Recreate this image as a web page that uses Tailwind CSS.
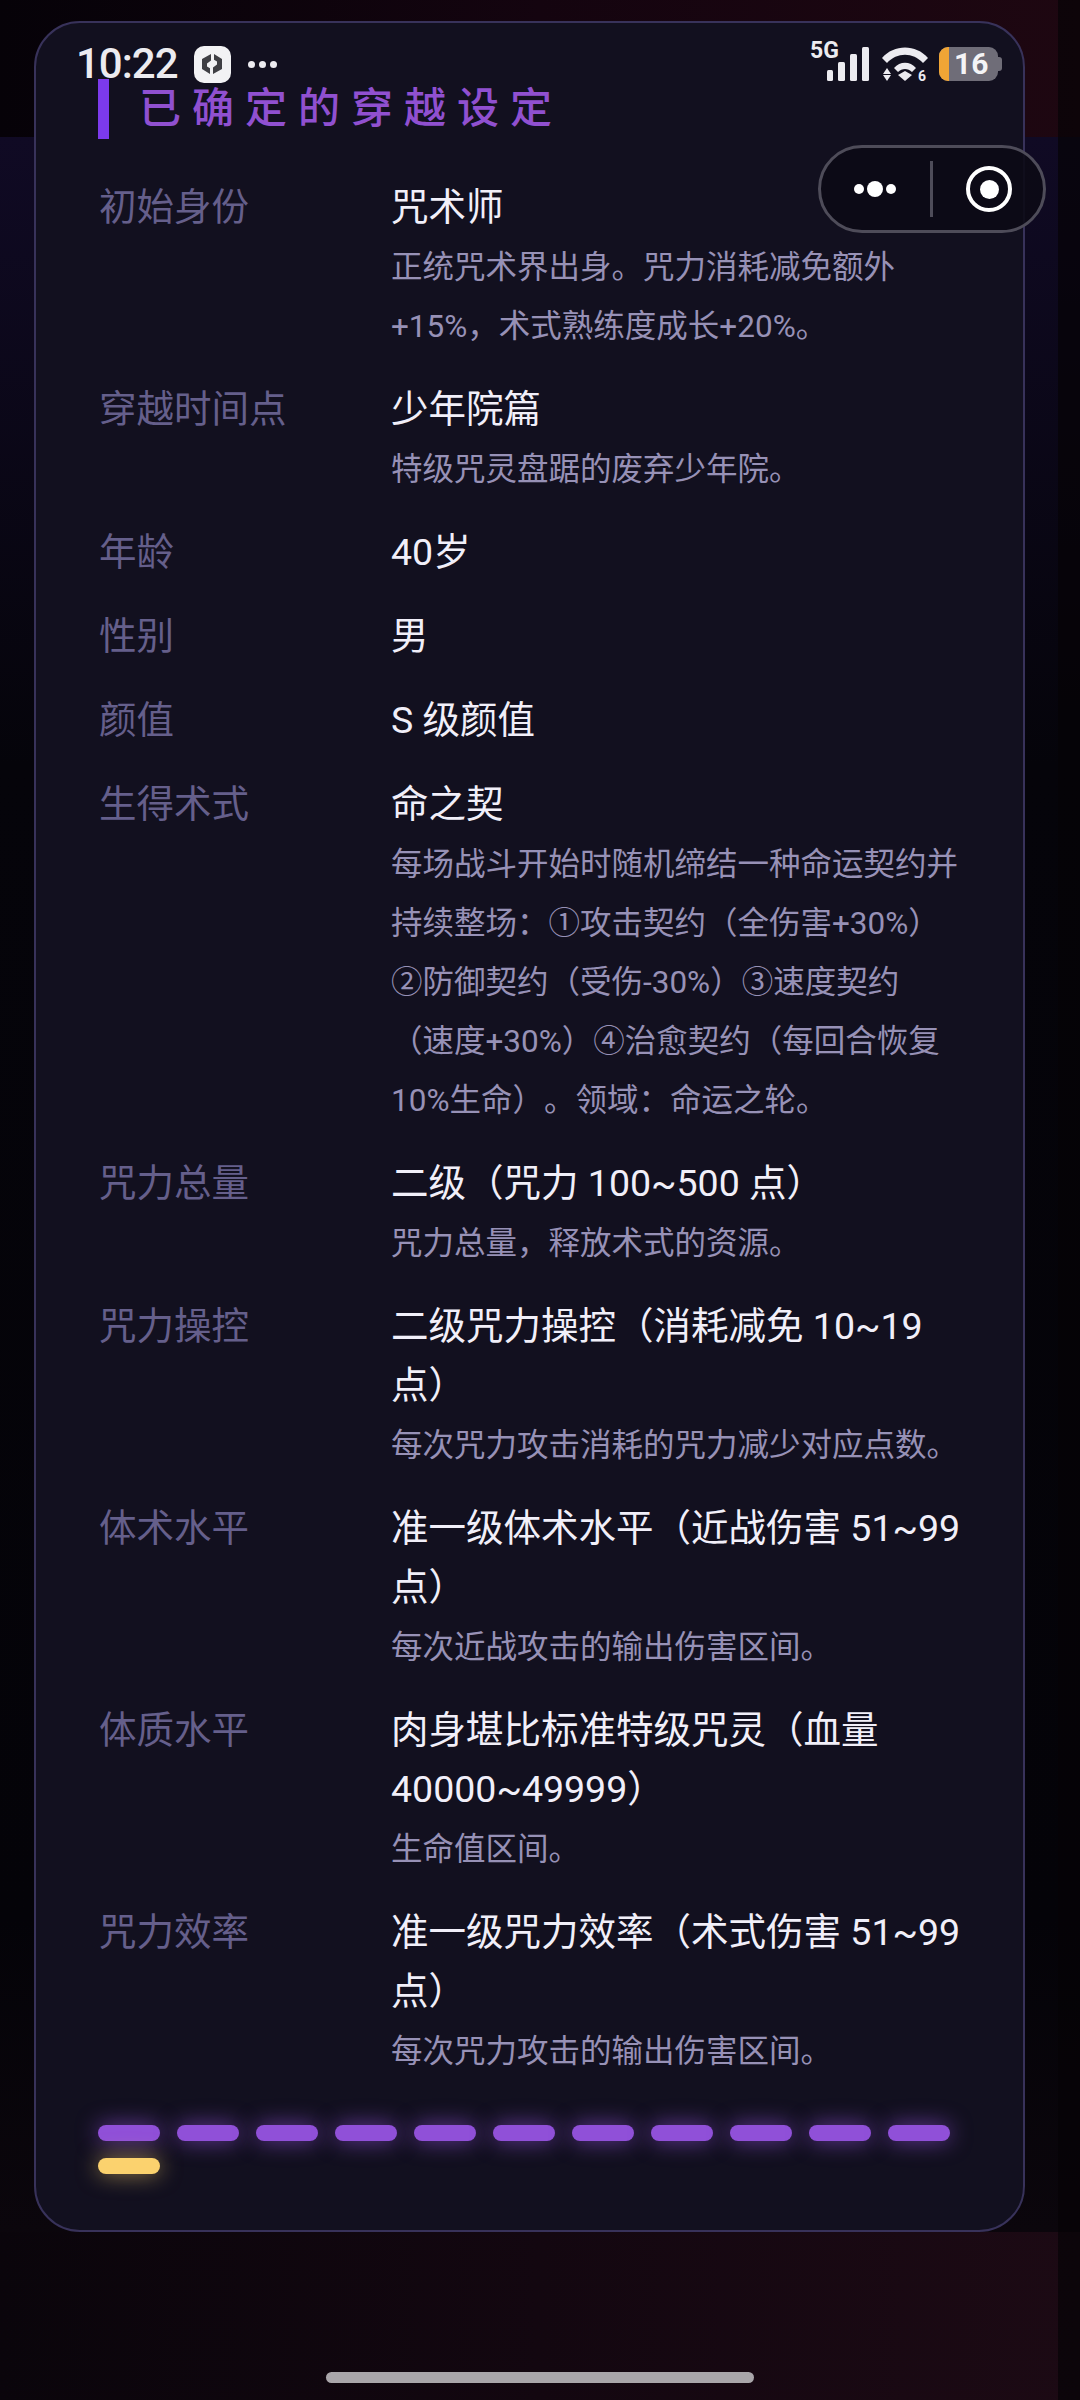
<!DOCTYPE html>
<html lang="zh-CN">
<head>
    <meta charset="UTF-8">
    <meta name="viewport" content="width=device-width, initial-scale=1.0">
    <title>已确定的穿越设定</title>
    <script src="https://cdn.jsdelivr.net/npm/@tailwindcss/browser@4"></script>
</head>
<body class="bg-[#08050d]">
<div class="relative w-[1080px] h-[2400px] overflow-hidden [text-spacing-trim:space-all] font-['Roboto','Noto_Sans_CJK_SC',sans-serif]">
    <!-- backdrop -->
    <div class="absolute inset-0 flex flex-col">
        <div class="h-[137px] bg-gradient-to-r from-[#060208] via-[#14040f] to-[#1e0711]"></div>
        <div class="flex-1 bg-[linear-gradient(to_bottom,#100a24_0%,#05040a_30%,#040308_85%,#0b060c_100%)]"></div>
        <div class="h-[168px] bg-gradient-to-r from-[#0a050b] via-[#130710] to-[#1c0a14]"></div>
    </div>
    <div class="absolute top-0 bottom-0 right-0 w-[22px] bg-[#050306]/70"></div>

    <!-- card -->
    <main class="relative ml-[34px] mt-[21px] w-[991px] h-[2211px] rounded-[46px] border-2 border-[#38325a] bg-[#12101f] pt-[56px] pl-[62px]">
        <div class="flex items-center h-[60px] border-l-[11px] border-[#7c3aed] pl-[30px]">
            <h1 class="text-[42px] font-medium leading-[64px] tracking-[11px] text-[#9050d0]">已确定的穿越设定</h1>
        </div>

        <div class="mt-[39px] pl-[1px] flex flex-col gap-[25px] text-[37.5px] leading-[59px]">
            <div class="flex">
                <div class="w-[292px] shrink-0 text-[#655f8b]">初始身份</div>
                <div class="flex-1">
                    <div class="text-[#f1eff9]">咒术师</div>
                    <div class="pt-[1px] -mb-[1px] text-[31.5px] text-[#9791b6]">正统咒术界出身。咒力消耗减免额外<br>+15%，术式熟练度成长+20%。</div>
                </div>
            </div>
            <div class="flex">
                <div class="w-[292px] shrink-0 text-[#655f8b]">穿越时间点</div>
                <div class="flex-1">
                    <div class="text-[#f1eff9]">少年院篇</div>
                    <div class="pt-[1px] -mb-[1px] text-[31.5px] text-[#9791b6]">特级咒灵盘踞的废弃少年院。</div>
                </div>
            </div>
            <div class="flex">
                <div class="w-[292px] shrink-0 text-[#655f8b]">年龄</div>
                <div class="flex-1 text-[#f1eff9]">40岁</div>
            </div>
            <div class="flex">
                <div class="w-[292px] shrink-0 text-[#655f8b]">性别</div>
                <div class="flex-1 text-[#f1eff9]">男</div>
            </div>
            <div class="flex">
                <div class="w-[292px] shrink-0 text-[#655f8b]">颜值</div>
                <div class="flex-1 text-[#f1eff9]">S 级颜值</div>
            </div>
            <div class="flex">
                <div class="w-[292px] shrink-0 text-[#655f8b]">生得术式</div>
                <div class="flex-1">
                    <div class="text-[#f1eff9]">命之契</div>
                    <div class="pt-[1px] -mb-[1px] text-[31.5px] text-[#9791b6]">每场战斗开始时随机缔结一种命运契约并<br>持续整场：①攻击契约（全伤害+30%）<br>②防御契约（受伤-30%）③速度契约<br>（速度+30%）④治愈契约（每回合恢复<br>10%生命）。领域：命运之轮。</div>
                </div>
            </div>
            <div class="flex">
                <div class="w-[292px] shrink-0 text-[#655f8b]">咒力总量</div>
                <div class="flex-1">
                    <div class="text-[#f1eff9]">二级（咒力 100~500 点）</div>
                    <div class="pt-[1px] -mb-[1px] text-[31.5px] text-[#9791b6]">咒力总量，释放术式的资源。</div>
                </div>
            </div>
            <div class="flex">
                <div class="w-[292px] shrink-0 text-[#655f8b]">咒力操控</div>
                <div class="flex-1">
                    <div class="text-[#f1eff9]">二级咒力操控（消耗减免 10~19<br>点）</div>
                    <div class="pt-[1px] -mb-[1px] text-[31.5px] text-[#9791b6]">每次咒力攻击消耗的咒力减少对应点数。</div>
                </div>
            </div>
            <div class="flex">
                <div class="w-[292px] shrink-0 text-[#655f8b]">体术水平</div>
                <div class="flex-1">
                    <div class="text-[#f1eff9]">准一级体术水平（近战伤害 51~99<br>点）</div>
                    <div class="pt-[1px] -mb-[1px] text-[31.5px] text-[#9791b6]">每次近战攻击的输出伤害区间。</div>
                </div>
            </div>
            <div class="flex">
                <div class="w-[292px] shrink-0 text-[#655f8b]">体质水平</div>
                <div class="flex-1">
                    <div class="text-[#f1eff9]">肉身堪比标准特级咒灵（血量<br>40000~49999）</div>
                    <div class="pt-[1px] -mb-[1px] text-[31.5px] text-[#9791b6]">生命值区间。</div>
                </div>
            </div>
            <div class="flex">
                <div class="w-[292px] shrink-0 text-[#655f8b]">咒力效率</div>
                <div class="flex-1">
                    <div class="text-[#f1eff9]">准一级咒力效率（术式伤害 51~99<br>点）</div>
                    <div class="pt-[1px] -mb-[1px] text-[31.5px] text-[#9791b6]">每次咒力攻击的输出伤害区间。</div>
                </div>
            </div>
        </div>

        <div class="mt-[45px] flex flex-wrap gap-[17px]">
            <span class="w-[62px] h-[16px] rounded-[8px] bg-[#9050d8] shadow-[0_0_22px_rgba(144,80,216,0.7)]"></span>
            <span class="w-[62px] h-[16px] rounded-[8px] bg-[#9050d8] shadow-[0_0_22px_rgba(144,80,216,0.7)]"></span>
            <span class="w-[62px] h-[16px] rounded-[8px] bg-[#9050d8] shadow-[0_0_22px_rgba(144,80,216,0.7)]"></span>
            <span class="w-[62px] h-[16px] rounded-[8px] bg-[#9050d8] shadow-[0_0_22px_rgba(144,80,216,0.7)]"></span>
            <span class="w-[62px] h-[16px] rounded-[8px] bg-[#9050d8] shadow-[0_0_22px_rgba(144,80,216,0.7)]"></span>
            <span class="w-[62px] h-[16px] rounded-[8px] bg-[#9050d8] shadow-[0_0_22px_rgba(144,80,216,0.7)]"></span>
            <span class="w-[62px] h-[16px] rounded-[8px] bg-[#9050d8] shadow-[0_0_22px_rgba(144,80,216,0.7)]"></span>
            <span class="w-[62px] h-[16px] rounded-[8px] bg-[#9050d8] shadow-[0_0_22px_rgba(144,80,216,0.7)]"></span>
            <span class="w-[62px] h-[16px] rounded-[8px] bg-[#9050d8] shadow-[0_0_22px_rgba(144,80,216,0.7)]"></span>
            <span class="w-[62px] h-[16px] rounded-[8px] bg-[#9050d8] shadow-[0_0_22px_rgba(144,80,216,0.7)]"></span>
            <span class="w-[62px] h-[16px] rounded-[8px] bg-[#9050d8] shadow-[0_0_22px_rgba(144,80,216,0.7)]"></span>
            <span class="w-[62px] h-[16px] rounded-[8px] bg-[#fbd26e] shadow-[0_0_22px_rgba(251,210,110,0.6)]"></span>
        </div>
    </main>

    <!-- status bar, sits over the page -->
    <div class="absolute top-[42px] left-[76px] h-[44px] flex items-center text-[#ecebf0]">
        <span class="text-[42px] font-medium leading-[44px] tracking-[-1px] font-['Roboto',sans-serif]">10:22</span>
        <span class="ml-[16px] w-[37px] h-[37px] rounded-[10px] bg-[#f2f2f4] flex items-center justify-center">
            <svg width="20" height="20" viewBox="0 0 20 20" fill="#3f3f44">
                <path d="M9 0v6.5L5 9.5v3l3 1.8V20L0 15V5z"/>
                <path d="M11 20v-6.5l4-3v-3l-3-1.8V0l8 5v10z"/>
            </svg>
        </span>
        <span class="ml-[17px] flex gap-[4px]">
            <i class="w-[7px] h-[7px] rounded-full bg-[#ecebf0]"></i>
            <i class="w-[7px] h-[7px] rounded-full bg-[#ecebf0]"></i>
            <i class="w-[7px] h-[7px] rounded-full bg-[#ecebf0]"></i>
        </span>
    </div>
    <div class="absolute top-[40px] left-[810px] flex items-start">
        <div class="relative w-[60px] h-[42px]">
            <span class="absolute left-0 top-[1px] text-[23px] leading-[20px] font-bold font-['Roboto',sans-serif] text-[#ecebf0]">5G</span>
            <svg class="absolute inset-0" width="60" height="42" viewBox="0 0 60 42" fill="#ecebf0">
                <rect x="17" y="30" width="6" height="11" rx="1.5"/>
                <rect x="28" y="22" width="7" height="19" rx="1.5"/>
                <rect x="40" y="14" width="7" height="27" rx="1.5"/>
                <rect x="52" y="7" width="7" height="34" rx="1.5"/>
            </svg>
        </div>
        <svg class="ml-[12px] mt-[7px]" width="46" height="38" viewBox="0 0 46 38" fill="#ecebf0">
            <path d="M0 11C12 -3 34 -3 46 11l-5 5C31 5 15 5 5 16z"/>
            <path d="M12 21c6-7 16-7 22 0l-4 4c-4-4-10-4-14 0z"/>
            <path d="M16 28l7-4 7 4-7 6z"/>
            <path d="M5 21l4 6H1z"/>
            <path d="M5 34l-4-6h8z"/>
            <text x="36" y="34" font-size="14" font-weight="700" font-family="Roboto, sans-serif">6</text>
        </svg>
        <div class="ml-[11px] mt-[7px] flex items-center">
            <div class="w-[59px] h-[34px] rounded-[9px] bg-[#6f6d78] flex items-center">
                <span class="w-[10px] h-full rounded-l-[9px] bg-[#f0a535]"></span>
                <span class="ml-[5px] text-[30px] leading-[34px] font-bold font-['Roboto',sans-serif] text-[#f4f4f6]">16</span>
            </div>
            <span class="w-[4px] h-[14px] rounded-r-[3px] bg-[#6f6d78]"></span>
        </div>
    </div>

    <!-- capsule -->
    <div class="absolute left-[818px] top-[145px] w-[228px] h-[88px] rounded-full border-[3px] border-[#4e4c59] bg-[#0c0a15]/90 flex items-center">
        <div class="flex-1 flex items-center justify-center gap-[3px] pr-[1px]">
            <i class="w-[10px] h-[10px] rounded-full bg-white"></i>
            <i class="w-[16px] h-[16px] rounded-full bg-white"></i>
            <i class="w-[10px] h-[10px] rounded-full bg-white"></i>
        </div>
        <div class="w-[3px] h-[56px] bg-[#4e4c59]"></div>
        <div class="flex-1 flex items-center justify-center pl-[3px]">
            <div class="w-[46px] h-[46px] rounded-full border-[4px] border-white flex items-center justify-center">
                <i class="w-[19px] h-[19px] rounded-full bg-white"></i>
            </div>
        </div>
    </div>

    <!-- home bar -->
    <div class="absolute left-[326px] top-[2372px] w-[428px] h-[11px] rounded-full bg-[#a9a6aa]"></div>
</div>
</body>
</html>
